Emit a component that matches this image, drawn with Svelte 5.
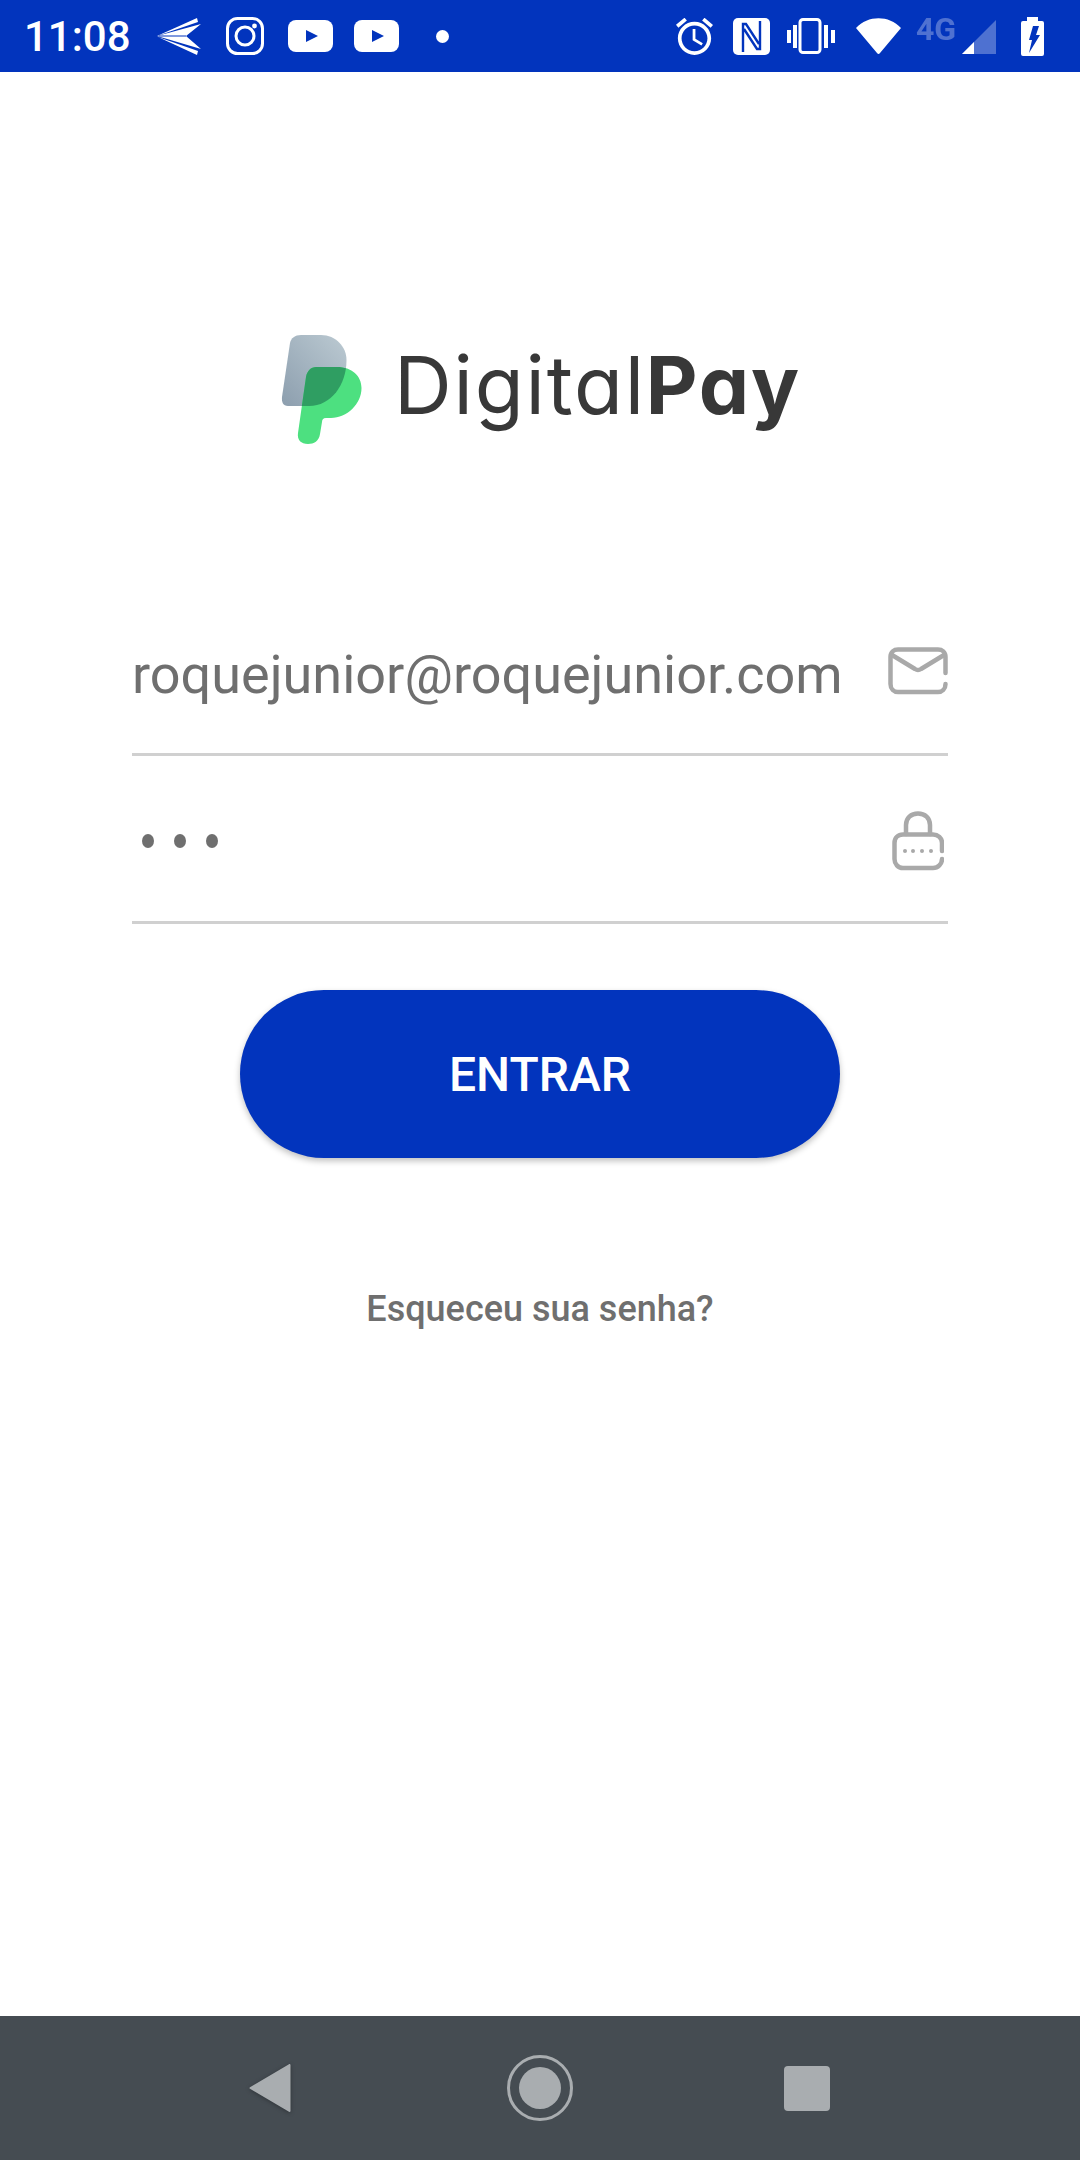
<script lang="ts">
  let email = 'roquejunior@roquejunior.com';
  const dots = [0, 1, 2];
</script>

<div class="screen">
  <header class="status">
    <span class="time">11:08</span>
    <svg class="i-send" width="44" height="37" viewBox="0 0 44 37" fill="#fff">
      <path d="M0 18 L40 0 L41 4 Z" />
      <path d="M1 19 L40 37 L41 33 Z" />
      <path d="M0 18 L44 6 L29 18 L44 31 Z" />
      <path d="M2 18 L29 18" stroke="#0234bd" stroke-width="1" />
    </svg>
    <svg class="i-insta" width="38" height="38" viewBox="0 0 38 38" fill="none" stroke="#fff" stroke-width="3">
      <rect x="1.5" y="1.5" width="35" height="35" rx="10" />
      <circle cx="19" cy="19" r="9" />
      <circle cx="28.5" cy="9" r="2.4" fill="#fff" stroke="none" />
    </svg>
    <svg class="i-yt" width="45" height="32" viewBox="0 0 45 32">
      <rect width="45" height="32" rx="8" fill="#fff" />
      <path d="M18 10 L30 16 L18 22 Z" fill="#0234bd" />
    </svg>
    <svg class="i-yt2" width="45" height="32" viewBox="0 0 45 32">
      <rect width="45" height="32" rx="8" fill="#fff" />
      <path d="M18 10 L30 16 L18 22 Z" fill="#0234bd" />
    </svg>
    <span class="dot"></span>

    <div class="status-right">
      <svg width="37" height="37" viewBox="2 2 20 20" fill="#fff">
        <path d="M22 5.72l-4.6-3.86-1.29 1.53 4.6 3.86L22 5.72zM7.88 3.39L6.6 1.86 2 5.71l1.29 1.53 4.59-3.85zM12.5 8H11v6l4.75 2.85.75-1.23-4-2.37V8zM12 4c-4.97 0-9 4.03-9 9s4.03 9 9 9 9-4.03 9-9-4.03-9-9-9zm0 16c-3.87 0-7-3.13-7-7s3.13-7 7-7 7 3.13 7 7-3.13 7-7 7z" />
      </svg>
      <svg class="i-nfc" width="37" height="37" viewBox="0 0 37 37">
        <rect width="37" height="37" rx="5" fill="#fff" />
        <path d="M10 34 V6 H13 L26 26 M27 3 V31 H24 L11 11" fill="none" stroke="#0234bd" stroke-width="2.4" />
      </svg>
      <svg class="i-vib" width="49" height="37" viewBox="0 0 49 37" fill="#fff">
        <rect x="14" y="1.5" width="20" height="33" rx="3" fill="none" stroke="#fff" stroke-width="3" />
        <rect x="1" y="12" width="4" height="13" />
        <rect x="7" y="7" width="4" height="23" />
        <rect x="38" y="7" width="4" height="23" />
        <rect x="45" y="12" width="4" height="13" />
      </svg>
      <svg class="i-wifi" width="45" height="37" viewBox="0 0 45 37" fill="#fff">
        <path d="M0 10 C12 -3 33 -3 45 10 L24 35 Q22.5 37 21 35 Z" />
      </svg>
      <span class="net">4G</span>
      <svg class="i-signal" width="34" height="34" viewBox="0 0 34 34">
        <path d="M0 34 L34 0 V34 Z" fill="#fff" opacity="0.3" />
        <path d="M0 34 L12 22 V34 Z" fill="#fff" />
      </svg>
      <svg class="i-batt" width="23" height="39" viewBox="0 0 23 39">
        <path d="M6 0 H17 V4 H21 Q23 4 23 6 V37 Q23 39 21 39 H2 Q0 39 0 37 V6 Q0 4 2 4 H6 Z" fill="#fff" />
        <path d="M12 9 H18 L15 18 H19 L8 36 L11 23 H8 Z" fill="#0234bd" />
      </svg>
    </div>
  </header>

  <main class="content">
    <div class="logo">
      <svg width="85" height="120" viewBox="0 0 85 120">
        <defs>
          <linearGradient id="grey" x1="1" y1="0" x2="0" y2="1">
            <stop offset="0" stop-color="#bccad2" />
            <stop offset="1" stop-color="#8c9eae" />
          </linearGradient>
          <clipPath id="greyClip">
            <path d="M22 5 H42 C57 5 67.5 17 67.5 30 C67.5 55 52 76 30 76 H9 C4 76 2.5 72 3 67 L11 13 C12 8 16 5 22 5 Z" />
          </clipPath>
        </defs>
        <path d="M22 5 H42 C57 5 67.5 17 67.5 30 C67.5 55 52 76 30 76 H9 C4 76 2.5 72 3 67 L11 13 C12 8 16 5 22 5 Z" fill="url(#grey)" />
        <path d="M37 37 H58 C73 37 82.5 46 82.5 58 C82.5 74 68 88 52 88 H47 C44 88 43 90 43 92 L41 104 C40 111 35 114 29 114 C22 114 18 110 19 103 L27 47 C28 41 32 37 37 37 Z" fill="#4de080" />
        <path d="M37 37 H58 C73 37 82.5 46 82.5 58 C82.5 74 68 88 52 88 H47 C44 88 43 90 43 92 L41 104 C40 111 35 114 29 114 C22 114 18 110 19 103 L27 47 C28 41 32 37 37 37 Z" fill="#2f9e62" clip-path="url(#greyClip)" />
      </svg>
      <span class="brand">Digital<b>Pay</b></span>
    </div>

    <div class="field">
      <span class="value">{email}</span>
      <svg class="i-mail" width="60" height="48" viewBox="0 0 60 48" fill="none" stroke="#a9a9a9" stroke-width="4.5" stroke-linecap="round" stroke-linejoin="round">
        <path d="M57.5 26 V10 C57.5 5 54 2.5 50 2.5 H10 C6 2.5 2.5 5 2.5 10 V37 C2.5 42 6 45 10 45 H50 C54 45 57.5 42 57.5 37" />
        <path d="M4 8 L27 22 Q30 24 33 22 L56 8" />
      </svg>
    </div>

    <div class="field">
      <span class="pass">
        {#each dots as d (d)}
          <i></i>
        {/each}
      </span>
      <svg class="i-lock" width="52" height="60" viewBox="0 0 52 60" fill="none" stroke="#a9a9a9" stroke-width="4.5" stroke-linecap="round" stroke-linejoin="round">
        <path d="M50 40 V32 C50 27 46 23.5 41 23.5 H11 C6 23.5 2.5 27 2.5 32 V48 C2.5 53 6 57 11 57 H41 C46 57 50 53 50 48" />
        <path d="M14 23 V14 C14 7 19 2.5 26 2.5 C33 2.5 38 7 38 14 V23" />
        <g fill="#a9a9a9" stroke="none">
          <circle cx="13" cy="40" r="2" />
          <circle cx="21" cy="40" r="2" />
          <circle cx="30" cy="40" r="2" />
          <circle cx="39" cy="40" r="2" />
        </g>
      </svg>
    </div>

    <button class="submit">ENTRAR</button>
    <a class="forgot" href="#esqueceu">Esqueceu sua senha?</a>
  </main>

  <nav class="nav">
    <svg class="n-back" width="42" height="50" viewBox="0 0 42 50">
      <path d="M40.5 2 V48 L1.5 25 Z" fill="#a9adb0" stroke="#a9adb0" stroke-width="2" stroke-linejoin="round" />
    </svg>
    <svg class="n-home" width="66" height="66" viewBox="0 0 66 66">
      <circle cx="33" cy="33" r="31.5" fill="none" stroke="#a9adb0" stroke-width="3" />
      <circle cx="33" cy="33" r="21" fill="#a9adb0" />
    </svg>
    <span class="n-recent"></span>
  </nav>
</div>

<style>
  :global(body) {
    margin: 0;
    background: #fff;
  }

  .screen {
    width: 1080px;
    height: 2160px;
    display: flex;
    flex-direction: column;
    font-family: Roboto, sans-serif;
  }

  .status {
    height: 72px;
    flex-shrink: 0;
    background: #0234bd;
    display: flex;
    align-items: center;
    padding-left: 24px;
    color: #fff;
    box-sizing: border-box;
  }

  .time {
    font-size: 42px;
    font-weight: 500;
    width: 133px;
  }

  .i-insta { margin-left: 25px; }
  .i-yt { margin-left: 24px; }
  .i-yt2 { margin-left: 21px; }

  .dot {
    width: 13px;
    height: 13px;
    border-radius: 50%;
    background: #fff;
    margin-left: 37px;
  }

  .status-right {
    margin-left: auto;
    padding-right: 36px;
    display: flex;
    align-items: center;
  }

  .i-nfc { margin-left: 20px; }
  .i-vib { margin-left: 16px; }
  .i-wifi { margin-left: 21px; }

  .net {
    font-size: 32px;
    font-weight: 700;
    opacity: 0.3;
    margin-left: 15px;
    margin-top: -15px;
    width: 46px;
  }

  .i-signal { margin-top: 2px; }
  .i-batt { margin-left: 25px; }

  .content {
    flex: 1;
    display: flex;
    flex-direction: column;
    padding: 0 132px;
  }

  .logo {
    margin-top: 258px;
    height: 120px;
    display: flex;
    align-items: center;
    justify-content: center;
    gap: 30px;
    filter: blur(0.7px);
  }

  .brand {
    font-family: Inter, sans-serif;
    font-size: 80px;
    font-weight: 400;
    font-feature-settings: 'cv11' 1;
    color: #383838;
    letter-spacing: 1.8px;
    margin-top: -12px;
  }

  .brand b {
    font-weight: 700;
  }

  .field {
    height: 165px;
    border-bottom: 3px solid #d0d0d0;
    display: flex;
    align-items: center;
    justify-content: space-between;
  }

  .logo + .field {
    margin-top: 138px;
  }

  .value {
    font-size: 54px;
    color: #6f6f6f;
    margin-top: 8px;
  }

  .pass {
    display: flex;
    gap: 20px;
    padding-left: 10px;
    margin-top: 5px;
  }

  .pass i {
    width: 12px;
    height: 14px;
    border-radius: 50%;
    background: #6f6f6f;
  }

  .i-lock {
    margin-right: 4px;
    margin-top: 5px;
  }

  .submit {
    align-self: center;
    margin-top: 66px;
    width: 600px;
    height: 168px;
    flex-shrink: 0;
    border: none;
    border-radius: 84px;
    background: #0234bd;
    color: #fff;
    font-family: Roboto, sans-serif;
    font-size: 48px;
    font-weight: 500;
    box-shadow: 0 3px 6px rgba(0, 0, 0, 0.25);
  }

  .forgot {
    align-self: center;
    margin-top: 130px;
    font-size: 36px;
    font-weight: 500;
    color: #6f6f6f;
    text-decoration: none;
  }

  .nav {
    height: 144px;
    flex-shrink: 0;
    background: #454c52;
    display: flex;
    align-items: center;
    justify-content: center;
    padding-right: 2px;
  }

  .n-back {
    margin-right: 216px;
    filter: drop-shadow(0 1px 2px rgba(0, 0, 0, 0.3));
  }

  .n-home { margin-right: 211px; }

  .n-recent {
    width: 46px;
    height: 45px;
    border-radius: 4px;
    background: #a9adb0;
  }
</style>
